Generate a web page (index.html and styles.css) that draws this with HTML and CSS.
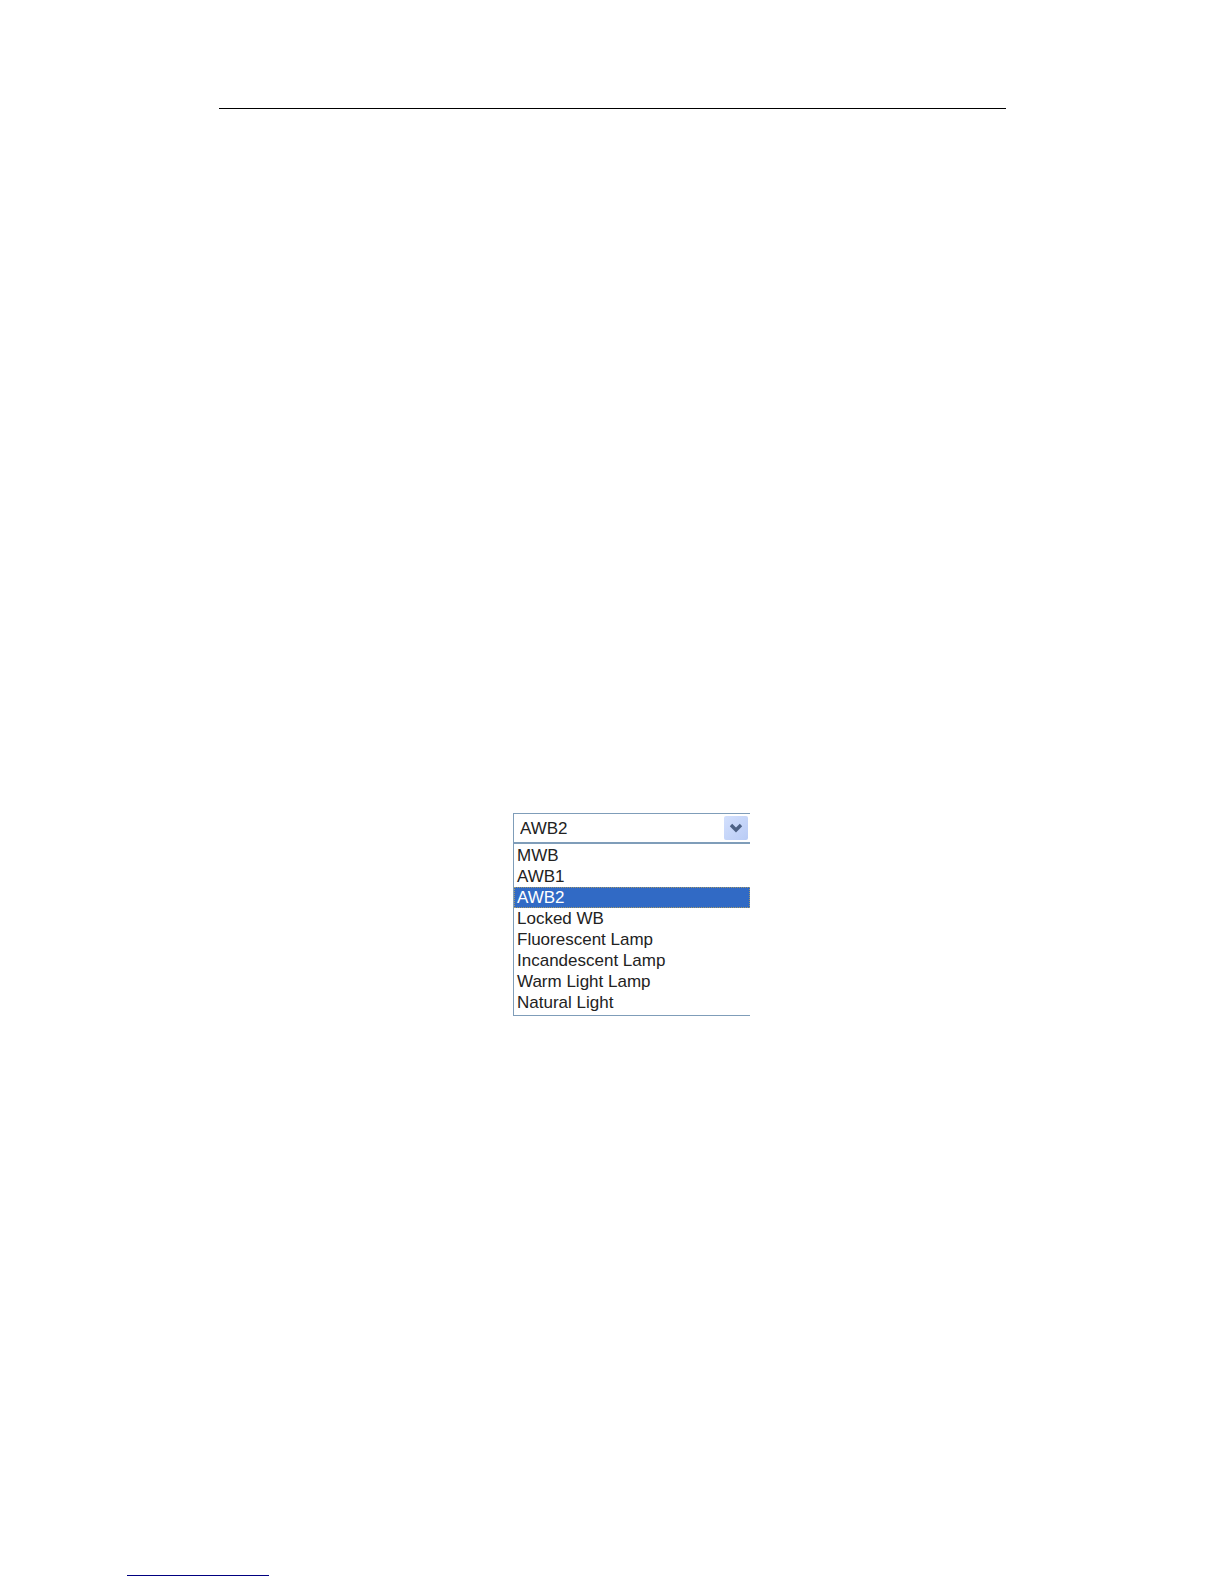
FILE: index.html
```html
<!DOCTYPE html>
<html lang="en">
<head>
<meta charset="utf-8">
<title>White Balance</title>
<link rel="stylesheet" href="styles.css">
</head>
<body>
<header class="page-header"><hr class="header-rule"></header>
<main class="content">
  <div class="combo">
    <div class="combo-field">
      <select class="combo-value" aria-label="White balance">
        <option>MWB</option>
        <option>AWB1</option>
        <option selected>AWB2</option>
        <option>Locked WB</option>
        <option>Fluorescent Lamp</option>
        <option>Incandescent Lamp</option>
        <option>Warm Light Lamp</option>
        <option>Natural Light</option>
      </select>
      <span class="combo-arrow">
        <svg width="24" height="24" viewBox="0 0 24 24" aria-hidden="true"><path d="M7 9l5 5 5-5" fill="none" stroke="#4d6185" stroke-width="3.4"/></svg>
      </span>
    </div>
    <select class="combo-list" size="8" aria-label="White balance modes">
      <option>MWB</option>
      <option>AWB1</option>
      <option selected>AWB2</option>
      <option>Locked WB</option>
      <option>Fluorescent Lamp</option>
      <option>Incandescent Lamp</option>
      <option>Warm Light Lamp</option>
      <option>Natural Light</option>
    </select>
  </div>
</main>
<footer class="page-footer"><hr class="footer-rule"></footer>
</body>
</html>
```
FILE: styles.css
```css
* {
  box-sizing: border-box;
}

body {
  margin: 0;
  min-height: 100vh;
  display: flex;
  flex-direction: column;
  background: #fff;
  color: #222;
  font-family: "Liberation Sans", Arial, sans-serif;
  font-size: 17px;
}

.page-header {
  padding: 108px 218px 0 219px;
}

.header-rule {
  margin: 0;
  border: 0;
  border-top: 1px solid #000;
}

.content {
  flex: 1;
  padding: 704px 218px 0 219px;
}

.combo {
  width: 237px;
  margin-left: 294px;
}

.combo-field {
  display: flex;
  align-items: center;
  height: 30px;
  padding-right: 2px;
  border: 1px solid #7f9db9;
  border-right: 0;
}

.combo-value {
  appearance: none;
  flex: 1;
  min-width: 0;
  height: 28px;
  padding: 0 0 0 6px;
  border: 0;
  background: transparent;
  color: inherit;
  font: inherit;
}

.combo-arrow {
  display: flex;
  width: 24px;
  height: 24px;
  border-radius: 2px;
  background: linear-gradient(135deg, #d3e0fd, #b9cbf5);
  pointer-events: none;
}

.combo-list {
  appearance: none;
  display: block;
  width: 100%;
  height: 173px;
  padding: 1px 0 0;
  overflow: hidden;
  border: 1px solid #7f9db9;
  border-right: 0;
  border-radius: 0;
  background: #fff;
  color: inherit;
  font: inherit;
}

.combo-list option {
  min-height: 21px;
  padding: 1px 3px 0;
  color: #222;
}

.combo-list option:checked {
  background: #316ac5 linear-gradient(#316ac5, #316ac5);
  color: #fff;
  outline: 1px dotted #a59a6a;
  outline-offset: -1px;
}

.page-footer {
  padding: 0 127px 8px;
}

.footer-rule {
  width: 142px;
  margin: 0;
  border: 0;
  border-top: 1px solid #000080;
}
```
